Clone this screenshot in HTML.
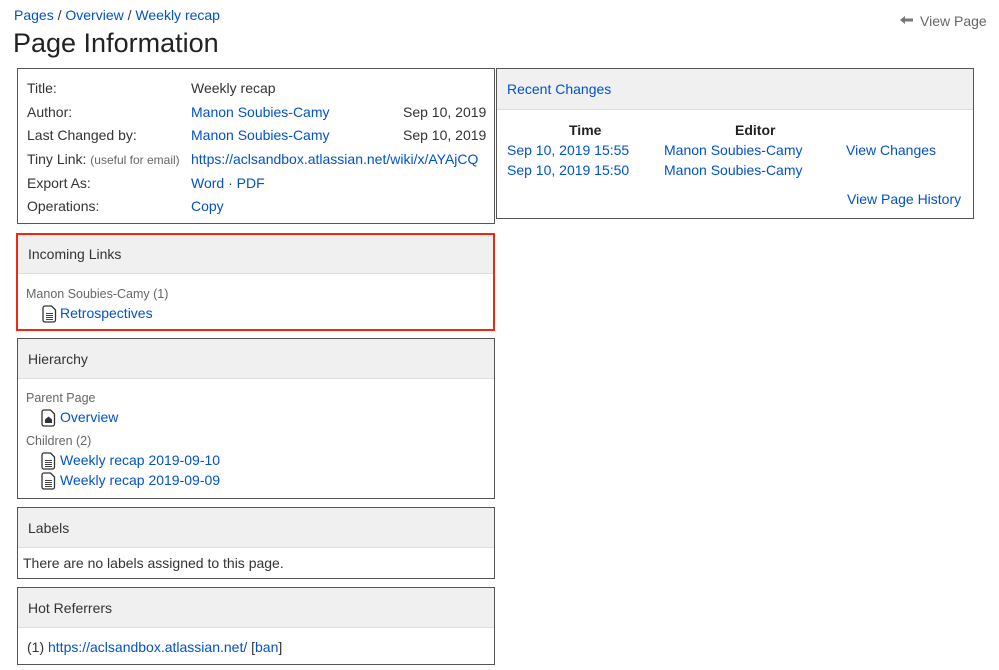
<!DOCTYPE html>
<html><head><meta charset="utf-8"><style>
*{margin:0;padding:0;box-sizing:border-box}
body{width:999px;height:670px;background:#fff;font-family:"Liberation Sans",sans-serif;font-size:14px;color:#333;position:relative;overflow:hidden}
a{color:#0052cc;text-decoration:none}
.abs{position:absolute;white-space:nowrap}
.box{position:absolute;border:1px solid #555;background:#fff}
.hd{position:absolute;left:0;right:0;top:0;background:#f0f0f0;border-bottom:1px solid #ddd;padding-left:10px}
.g{color:#666;font-size:12.5px}
svg{position:absolute}
</style></head><body>
<div class="abs" style="left:14px;top:7px;font-size:14px"><a>Pages</a> / <a>Overview</a> / <a>Weekly recap</a></div>
<div class="abs" style="left:13px;top:28px;font-size:27px;color:#222">Page Information</div>
<svg style="left:900px;top:15px" width="14" height="10" viewBox="0 0 14 10"><path d="M0 5l5-4v2.5h8v3H5V9z" fill="#777"/></svg>
<div class="abs" style="left:920px;top:13px;color:#666;font-size:14px">View Page</div>

<div class="box" style="left:17px;top:68px;width:478px;height:156px">
<div class="abs" style="left:9px;top:11px">Title:</div><div class="abs" style="left:173px;top:11px">Weekly recap</div>
<div class="abs" style="left:9px;top:35px">Author:</div><div class="abs" style="left:173px;top:35px"><a>Manon Soubies-Camy</a></div><div class="abs" style="left:385px;top:35px">Sep 10, 2019</div>
<div class="abs" style="left:9px;top:58px">Last Changed by:</div><div class="abs" style="left:173px;top:58px"><a>Manon Soubies-Camy</a></div><div class="abs" style="left:385px;top:58px">Sep 10, 2019</div>
<div class="abs" style="left:9px;top:82px">Tiny Link: <span style="font-size:12px;color:#666">(useful for email)</span></div><div class="abs" style="left:173px;top:82px"><a>https://aclsandbox.atlassian.net/wiki/x/AYAjCQ</a></div>
<div class="abs" style="left:9px;top:106px">Export As:</div><div class="abs" style="left:173px;top:106px"><a>Word</a> · <a>PDF</a></div>
<div class="abs" style="left:9px;top:129px">Operations:</div><div class="abs" style="left:173px;top:129px"><a>Copy</a></div>
</div>

<div class="box" style="left:496px;top:68px;width:478px;height:151px">
<div class="hd" style="height:41px"><a class="abs" style="left:10px;top:12px">Recent Changes</a></div>
<div class="abs" style="left:72px;top:53px;font-weight:bold;color:#222">Time</div>
<div class="abs" style="left:238px;top:53px;font-weight:bold;color:#222">Editor</div>
<a class="abs" style="left:10px;top:73px">Sep 10, 2019 15:55</a><a class="abs" style="left:167px;top:73px">Manon Soubies-Camy</a><a class="abs" style="left:349px;top:73px">View Changes</a>
<a class="abs" style="left:10px;top:93px">Sep 10, 2019 15:50</a><a class="abs" style="left:167px;top:93px">Manon Soubies-Camy</a>
<a class="abs" style="left:350px;top:122px">View Page History</a>
</div>

<div class="box" style="left:16px;top:233px;width:479px;height:98px;border:2px solid #f0280f">
<div class="hd" style="height:39px"><div class="abs" style="left:10px;top:11px">Incoming Links</div></div>
<div class="abs g" style="left:8px;top:52px">Manon Soubies-Camy (1)</div>
<svg style="left:24px;top:70px" width="15" height="18" viewBox="0 0 15 18"><path d="M3 1h6.5l4 4v10a2 2 0 0 1-2 2H3a2 2 0 0 1-2-2V3a2 2 0 0 1 2-2z" fill="#fff" stroke="#333" stroke-width="1.3" stroke-linejoin="round"/><path d="M4 8.5h7M4 10.5h7M4 12.5h7M4 14.5h7" stroke="#444" stroke-width="1"/></svg>
<a class="abs" style="left:42px;top:70px">Retrospectives</a>
</div>

<div class="box" style="left:17px;top:338px;width:478px;height:161px">
<div class="hd" style="height:40px"><div class="abs" style="left:10px;top:12px">Hierarchy</div></div>
<div class="abs g" style="left:8px;top:52px">Parent Page</div>
<svg style="left:23px;top:70px" width="15" height="18" viewBox="0 0 15 18"><path d="M3 1h6.5l4 4v10a2 2 0 0 1-2 2H3a2 2 0 0 1-2-2V3a2 2 0 0 1 2-2z" fill="#fff" stroke="#333" stroke-width="1.3" stroke-linejoin="round"/><path d="M4 10.5l3.5-3 3.5 3v3.5H4z" fill="#333"/></svg>
<a class="abs" style="left:42px;top:70px">Overview</a>
<div class="abs g" style="left:8px;top:95px">Children (2)</div>
<svg style="left:23px;top:113px" width="15" height="18" viewBox="0 0 15 18"><path d="M3 1h6.5l4 4v10a2 2 0 0 1-2 2H3a2 2 0 0 1-2-2V3a2 2 0 0 1 2-2z" fill="#fff" stroke="#333" stroke-width="1.3" stroke-linejoin="round"/><path d="M4 8.5h7M4 10.5h7M4 12.5h7M4 14.5h7" stroke="#444" stroke-width="1"/></svg>
<a class="abs" style="left:42px;top:113px">Weekly recap 2019-09-10</a>
<svg style="left:23px;top:133px" width="15" height="18" viewBox="0 0 15 18"><path d="M3 1h6.5l4 4v10a2 2 0 0 1-2 2H3a2 2 0 0 1-2-2V3a2 2 0 0 1 2-2z" fill="#fff" stroke="#333" stroke-width="1.3" stroke-linejoin="round"/><path d="M4 8.5h7M4 10.5h7M4 12.5h7M4 14.5h7" stroke="#444" stroke-width="1"/></svg>
<a class="abs" style="left:42px;top:133px">Weekly recap 2019-09-09</a>
</div>

<div class="box" style="left:17px;top:507px;width:478px;height:72px">
<div class="hd" style="height:40px"><div class="abs" style="left:10px;top:12px">Labels</div></div>
<div class="abs" style="left:5px;top:47px">There are no labels assigned to this page.</div>
</div>

<div class="box" style="left:17px;top:587px;width:478px;height:78px">
<div class="hd" style="height:40px"><div class="abs" style="left:10px;top:12px">Hot Referrers</div></div>
<div class="abs" style="left:9px;top:51px">(1) <a>https://aclsandbox.atlassian.net/</a> [<a>ban</a>]</div>
</div>
</body></html>
